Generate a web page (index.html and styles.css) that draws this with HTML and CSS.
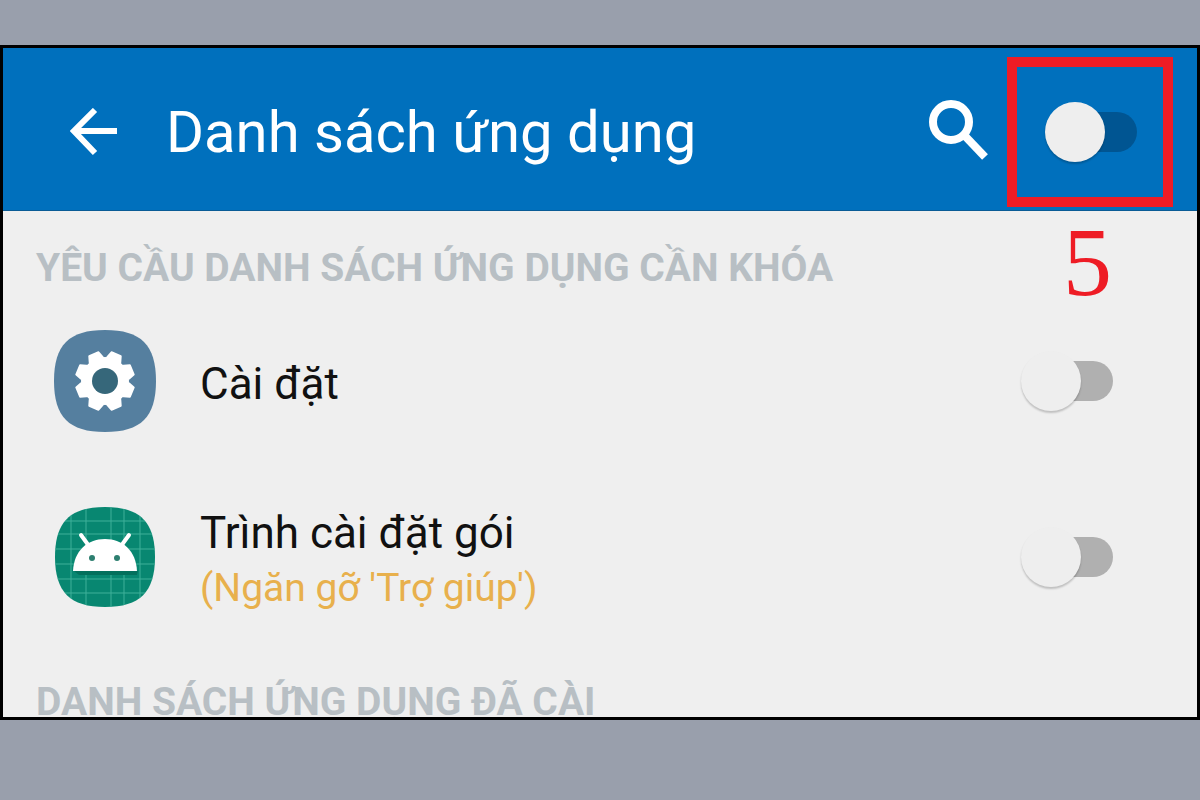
FILE: index.html
```
<!DOCTYPE html>
<html lang="vi">
<head>
    <meta charset="UTF-8">
    <meta name="viewport" content="width=device-width, initial-scale=1.0">
    <title>Danh sách ứng dụng</title>
    <link rel="stylesheet" href="styles.css">
</head>
<body>
    <main class="screen">
        <header class="app-bar">
            <button class="icon-btn" type="button" aria-label="Quay lại">
                <svg width="48" height="48" viewBox="0 0 48 48" fill="none" stroke="#fff" stroke-width="6">
                    <path d="M25 2 4 23l21 22M4 23h43"/>
                </svg>
            </button>
            <h1>Danh sách ứng dụng</h1>
            <button class="icon-btn search-btn" type="button" aria-label="Tìm kiếm">
                <svg width="60" height="64" viewBox="0 0 60 64" fill="none" stroke="#fff">
                    <circle cx="22" cy="22" r="18" stroke-width="8"/>
                    <path d="m36 36 20 21" stroke-width="8"/>
                </svg>
            </button>
            <div class="highlight">
                <input class="toggle toggle-dark" type="checkbox" aria-label="Bật khóa ứng dụng">
                <span class="step">5</span>
            </div>
        </header>

        <h2>YÊU CẦU DANH SÁCH ỨNG DỤNG CẦN KHÓA</h2>
        <ul class="app-list">
            <li>
                <svg class="app-icon" viewBox="0 0 102 102">
                    <path fill="#557f9f" d="M51 0C87 0 102 15 102 51S87 102 51 102 0 87 0 51 15 0 51 0Z"/>
                    <g fill="#fff" stroke="#fff" stroke-width="2" stroke-linejoin="round">
                        <circle cx="51" cy="51" r="23"/>
                        <path d="M44 28l2-6h10l2 6v46l-2 6H46l-2-6z" transform="rotate(22.5 51 51)"/>
                        <path d="M44 28l2-6h10l2 6v46l-2 6H46l-2-6z" transform="rotate(67.5 51 51)"/>
                        <path d="M44 28l2-6h10l2 6v46l-2 6H46l-2-6z" transform="rotate(112.5 51 51)"/>
                        <path d="M44 28l2-6h10l2 6v46l-2 6H46l-2-6z" transform="rotate(157.5 51 51)"/>
                    </g>
                    <circle cx="51" cy="51" r="13" fill="#36677a"/>
                </svg>
                <label class="app-text" for="lock-settings">
                    <span class="app-name">Cài đặt</span>
                </label>
                <input class="toggle" type="checkbox" id="lock-settings">
            </li>
            <li>
                <svg class="app-icon" viewBox="0 0 102 102">
                    <defs>
                        <clipPath id="tile"><path d="M51 1C86 1 101 16 101 51S86 101 51 101 1 86 1 51 16 1 51 1Z"/></clipPath>
                    </defs>
                    <g clip-path="url(#tile)">
                        <path fill="#088771" d="M0 0h102v102H0z"/>
                        <path fill="none" stroke="#3fb09a" stroke-width="1" d="M17 0v102M32 0v102M57 0v102M70 0v102M86 0v102M0 15h102M0 28h102M0 43h102M0 58h102M0 73h102M0 87h102"/>
                        <path fill="#04705d" d="m20 65 5 4h58l1-4z"/>
                    </g>
                    <path fill="none" stroke="#fff" stroke-width="4" stroke-linecap="round" d="m27 29 8 11M75 29l-8 11"/>
                    <path fill="#fff" d="M19 65C20 45 33 33 51 33s31 12 32 32z"/>
                    <circle cx="38" cy="52" r="3" fill="#2d7f70"/>
                    <circle cx="63" cy="52" r="3" fill="#2d7f70"/>
                </svg>
                <label class="app-text" for="lock-installer">
                    <span class="app-name">Trình cài đặt gói</span>
                    <span class="app-note">(Ngăn gỡ 'Trợ giúp')</span>
                </label>
                <input class="toggle" type="checkbox" id="lock-installer">
            </li>
        </ul>

        <h2>DANH SÁCH ỨNG DỤNG ĐÃ CÀI</h2>
    </main>
</body>
</html>
```
FILE: styles.css
```
* {
    box-sizing: border-box;
}
body {
    margin: 0;
    padding: 45px 0 80px;
    height: 100vh;
    display: flex;
    flex-direction: column;
    background: #999fac;
    font-family: Roboto, "Liberation Sans", sans-serif;
}
.screen {
    flex: 1;
    min-height: 0;
    overflow: hidden;
    border: 3px solid #000;
    background: #efefef;
}
.app-bar {
    display: flex;
    align-items: center;
    padding: 9px 24px 3px 67px;
    background: #0070bd;
    border-bottom: 1px solid #0a5c96;
    color: #fff;
}
h1 {
    flex: 1;
    margin: 0 0 0 48px;
    font-size: 58px;
    line-height: 66px;
    font-weight: 400;
    white-space: nowrap;
}
.icon-btn {
    display: flex;
    padding: 0;
    border: none;
    background: none;
    cursor: pointer;
}
.search-btn {
    margin-right: 18px;
}
.highlight {
    position: relative;
    display: flex;
    align-items: center;
    height: 150px;
    padding: 0 26px 0 28px;
    border: 10px solid #ee1c25;
}
.step {
    position: absolute;
    top: 100%;
    left: 46px;
    margin-top: 16px;
    color: #ee1c25;
    font-family: "Liberation Serif", serif;
    font-size: 98px;
    line-height: 98px;
}

/* switches */
.toggle {
    --track: #b0b0b0;
    appearance: none;
    position: relative;
    flex: none;
    width: 92px;
    height: 60px;
    margin: 0;
    cursor: pointer;
}
.toggle::before {
    content: "";
    position: absolute;
    inset: 10px 0 10px 20px;
    border-radius: 20px;
    background: var(--track);
}
.toggle::after {
    content: "";
    position: absolute;
    top: 0;
    left: 0;
    width: 60px;
    height: 60px;
    border-radius: 50%;
    background: #eee;
    box-shadow: 0 2px 2px rgba(0, 0, 0, 0.2);
}
.toggle:checked::after {
    left: 32px;
}
.toggle-dark {
    --track: #005592;
}

h2 {
    margin: 0;
    padding: 34px 33px 2px;
    color: #b8bfc4;
    font-size: 39px;
    line-height: 46px;
    font-weight: 700;
    white-space: nowrap;
}
.app-list {
    margin: 0;
    padding: 0;
    list-style: none;
}
.app-list li {
    display: flex;
    align-items: center;
    height: 176px;
    padding: 0 84px 0 51px;
}
.app-icon {
    flex: none;
    width: 102px;
    height: 102px;
}
.app-text {
    flex: 1;
    display: flex;
    flex-direction: column;
    margin-left: 44px;
    padding-top: 6px;
}
.app-name {
    color: #111;
    font-size: 44px;
    line-height: 56px;
}
.app-note {
    color: #e8b04c;
    font-size: 39px;
    line-height: 54px;
}
```
